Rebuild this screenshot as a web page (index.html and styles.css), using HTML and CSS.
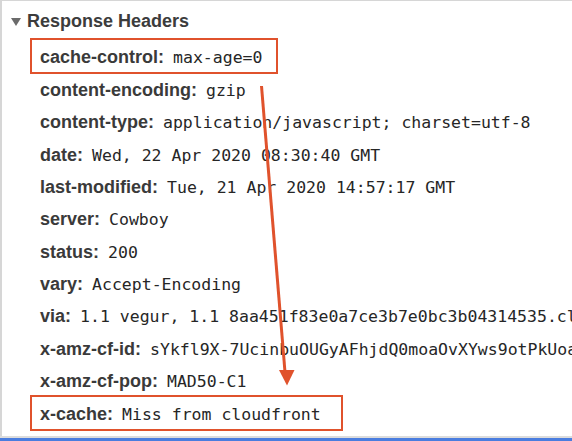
FILE: index.html
```html
<!DOCTYPE html>
<html lang="en">
<head>
  <meta charset="UTF-8">
  <meta name="viewport" content="width=device-width, initial-scale=1.0">
  <title>Response Headers</title>
  <link rel="stylesheet" href="styles.css">
</head>
<body>
  <div class="page">
    <div class="panel">
      <div class="section__title">
        <svg class="section__toggle" width="10" height="8" viewBox="0 0 10 8"><polygon points="0,0 10,0 5,8" fill="#6b6b6b"/></svg>
        Response Headers
      </div>
      <div class="headers">
        <div class="header header--marked"><span class="header__key">cache-control:</span><span class="header__value">max-age=0</span></div>
        <div class="header"><span class="header__key">content-encoding:</span><span class="header__value">gzip</span></div>
        <div class="header"><span class="header__key">content-type:</span><span class="header__value">application/javascript; charset=utf-8</span></div>
        <div class="header"><span class="header__key">date:</span><span class="header__value">Wed, 22 Apr 2020 08:30:40 GMT</span></div>
        <div class="header"><span class="header__key">last-modified:</span><span class="header__value">Tue, 21 Apr 2020 14:57:17 GMT</span></div>
        <div class="header"><span class="header__key">server:</span><span class="header__value">Cowboy</span></div>
        <div class="header"><span class="header__key">status:</span><span class="header__value">200</span></div>
        <div class="header"><span class="header__key">vary:</span><span class="header__value">Accept-Encoding</span></div>
        <div class="header"><span class="header__key">via:</span><span class="header__value">1.1 vegur, 1.1 8aa451f83e0a7ce3b7e0bc3b04314535.cloudfront.net (CloudFront)</span></div>
        <div class="header"><span class="header__key">x-amz-cf-id:</span><span class="header__value">sYkfl9X-7UcinbuOUGyAFhjdQ0moaOvXYws9otPkUoaQ1c0Xbq2kQg==</span></div>
        <div class="header"><span class="header__key">x-amz-cf-pop:</span><span class="header__value">MAD50-C1</span></div>
        <div class="header header--marked header--wide"><span class="header__key">x-cache:</span><span class="header__value">Miss from cloudfront</span></div>
      </div>
      <!-- annotation arrow -->
      <svg class="arrow" width="572" height="436" viewBox="0 0 572 436">
        <line x1="261.5" y1="86" x2="285" y2="372" stroke="#e0522c" stroke-width="3"/>
        <polygon points="279,370 294.5,370 287,385.5" fill="#e0522c"/>
      </svg>
    </div>
    <div class="statusbar"></div>
  </div>
</body>
</html>
```

FILE: styles.css
```css
* {
  box-sizing: border-box;
}
body {
  margin: 0;
  background: #fff;
}
.page {
  width: 572px;
  height: 441px;
  display: flex;
  flex-direction: column;
  overflow: hidden;
}
.panel {
  flex: 1;
  position: relative;
  border-top: 1px solid #d6d6d6;
  border-left: 2px solid #d6d6d6;
  overflow: hidden;
}
.section__title {
  margin: 4px 0 0 9px;
  height: 32px;
  line-height: 32px;
  font: bold 18px/32px 'Liberation Sans', Arial, sans-serif;
  color: #3c3c3c;
  display: flex;
  align-items: center;
  gap: 6px;
  white-space: nowrap;
}
.section__toggle {
  margin-top: 1px;
}
.headers {
  padding: 1px 0 0 38px;
}
.header {
  font: bold 18px/32.33px 'Liberation Sans', Arial, sans-serif;
  color: #3a3a3a;
  white-space: nowrap;
}
.header__key {
  line-height: 1;
}
.header__value {
  margin-left: 9px;
  line-height: 1;
  font: normal 16.5px 'DejaVu Sans Mono', 'Liberation Mono', monospace;
  color: #262626;
}
.header--marked {
  display: inline-block;
  margin-left: -10px;
  padding: 2px 14px 0 8px;
  border: 2px solid #e0522c;
  line-height: 30px;
}
.header--wide {
  margin-top: -2px;
  padding-right: 20px;
}
.arrow {
  position: absolute;
  left: -2px;
  top: -1px;
  pointer-events: none;
}
.statusbar {
  height: 5px;
  border-top: 2px solid #dcdcdc;
  background: #4a7ddf;
}
```
